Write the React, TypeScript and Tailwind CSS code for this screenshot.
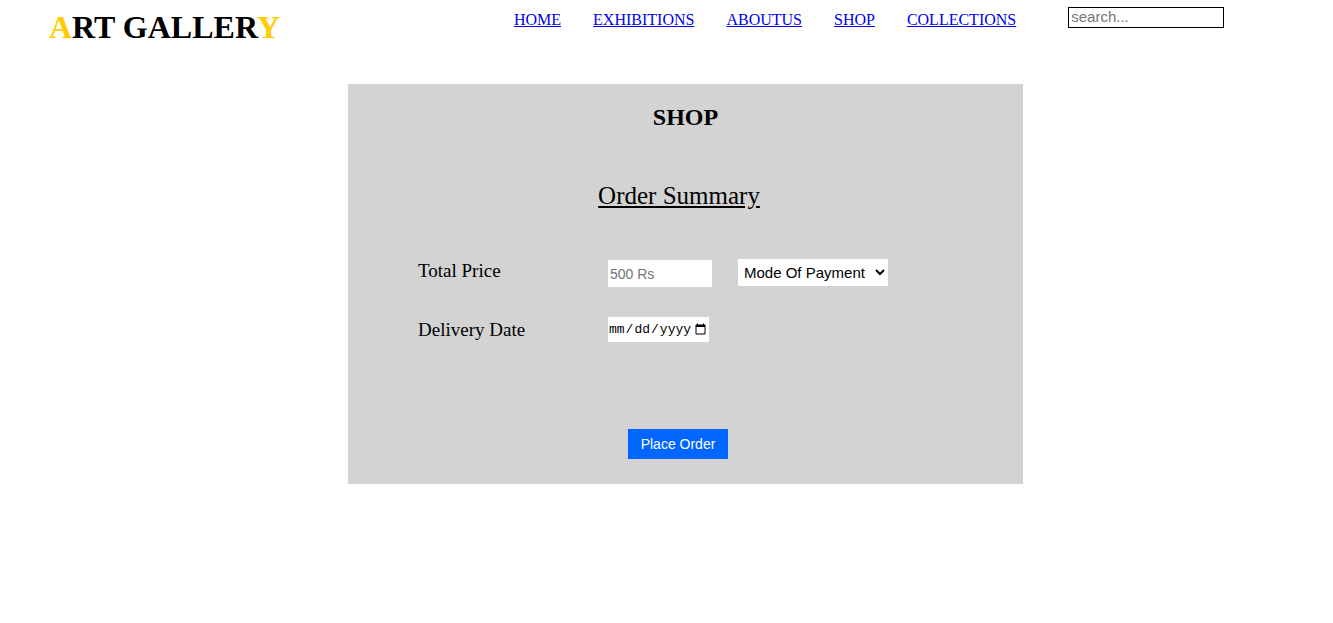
import React from 'react';

export default function App() {
  const links = ['HOME', 'EXHIBITIONS', 'ABOUTUS', 'SHOP', 'COLLECTIONS'];

  return (
    <div className="min-h-screen bg-white text-black font-['Liberation_Serif',serif]">
      {/* HEADER */}
      <header className="flex items-start h-[84px]">
        <h1 className="ml-[49px] mt-[9px] text-[32px] leading-[36px] font-bold">
          <span className="text-[#ffcc00]">A</span>RT GALLER<span className="text-[#ffcc00]">Y</span>
        </h1>
        <nav className="ml-[234px] mt-[10px] flex gap-8 text-[16px] leading-[20px]">
          {links.map((l) => (
            <a key={l} href="#" className="text-[#0000ee] underline">
              {l}
            </a>
          ))}
        </nav>
        <input
          placeholder="search..."
          className="ml-[52px] mt-[7px] w-[156px] h-[21px] border border-black px-[2px] text-[15px] font-['Liberation_Sans',Arial,sans-serif] placeholder:text-[#757575] outline-none"
        />
      </header>

      {/* SHOP PANEL */}
      <section className="ml-[348px] w-[675px] h-[400px] bg-[#d3d3d3] flex flex-col">
        <h2 className="mt-[19px] text-center text-[24px] leading-[28px] font-bold">SHOP</h2>
        <h3 className="mt-[50px] pr-[13px] text-center text-[25px] leading-[30px] underline">Order Summary</h3>

        <div className="mt-[49px] ml-[70px] flex flex-col gap-[32px]">
          <div className="flex items-start">
            <span className="w-[190px] text-[19px] leading-[22px]">Total Price</span>
            <input
              placeholder="500 Rs"
              className="mt-0 w-[104px] h-[27px] bg-white px-[2px] text-[14px] font-['Liberation_Sans',Arial,sans-serif] placeholder:text-[#757575] outline-none"
            />
            <select className="mt-[-1px] ml-[26px] w-[150px] h-[27px] bg-white px-[2px] text-[15px] font-['Liberation_Sans',Arial,sans-serif] outline-none">
              <option>Mode Of Payment</option>
              <option>Cash On Delivery</option>
              <option>Card</option>
            </select>
          </div>
          <div className="flex items-start">
            <span className="w-[190px] text-[19px] leading-[22px]">Delivery Date</span>
            <input
              type="date"
              lang="en-GB"
              className="mt-[-2px] w-[101px] h-[25px] bg-white text-[13px] font-['Liberation_Mono',monospace] outline-none"
            />
          </div>
        </div>

        <div className="mt-[87px] pr-[15px] flex justify-center">
          <button className="w-[100px] h-[30px] bg-[#0066ff] text-white text-[14px] font-['Liberation_Sans',Arial,sans-serif]">
            Place Order
          </button>
        </div>
      </section>
    </div>
  );
}
